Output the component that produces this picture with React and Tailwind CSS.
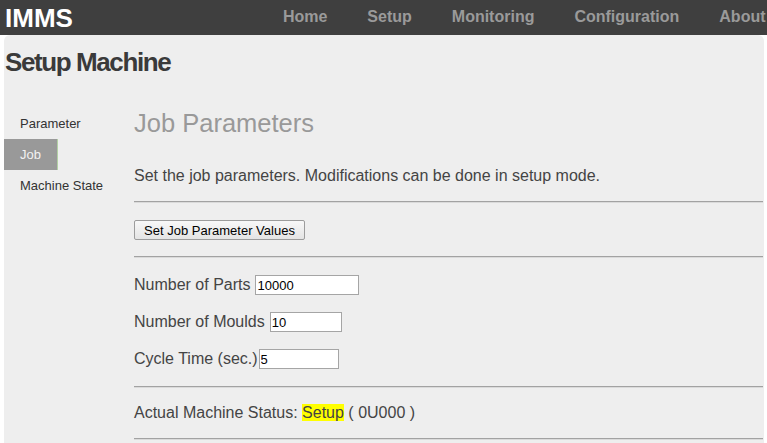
const NAV_ITEMS = ["Home", "Setup", "Monitoring", "Configuration", "About"];

const SIDE_ITEMS = [
  { label: "Parameter", active: false },
  { label: "Job", active: true },
  { label: "Machine State", active: false },
];

const Rule = () => (
  <div className="h-[2px] border-t border-b border-t-[#a2a2a2] border-b-[#dadada]" />
);

const Field = ({ label, value, width, spaced = true, className = "" }) => (
  <div className={`flex items-center h-[20px] ${className}`}>
    <span className="text-[16px] text-[#444]">{label}</span>
    <input
      defaultValue={value}
      className={`h-[20px] ${spaced ? "ml-[5px]" : "ml-[1px]"} ${width} border border-[#a5a5a5] bg-white px-[1px] text-[13px] text-black outline-none`}
    />
  </div>
);

const App = () => {
  return (
    <div
      className="min-h-[443px] w-[767px] overflow-hidden bg-white"
      style={{ fontFamily: '"Liberation Sans", Arial, sans-serif' }}
    >
      <div className="flex h-[35px] items-center bg-[#3f3f3f]">
        <div className="pl-[5px] text-[26px] font-bold leading-none text-white">
          IMMS
        </div>
        <ul className="-mt-[1px] ml-[210px] flex gap-[40px] whitespace-nowrap text-[16px] font-bold text-[#9a9a9a]">
          {NAV_ITEMS.map((item) => (
            <li key={item}>{item}</li>
          ))}
        </ul>
      </div>

      <div className="ml-[4px] mr-[3px] min-h-[420px] rounded-t-[6px] bg-[#eeeeee] pt-[12px]">
        <h1 className="pl-[1px] text-[26px] font-bold leading-[30px] tracking-[-1.4px] text-[#3a3a3a]">
          Setup Machine
        </h1>

        <div className="mt-[31px] flex">
          <ul className="w-[130px] shrink-0 text-[13px]">
            {SIDE_ITEMS.map((item) => (
              <li key={item.label} className="h-[31px]">
                <span
                  className={
                    item.active
                      ? "inline-flex h-[31px] items-center border-r border-[#b2cfa4] bg-[#999] px-[16px] text-[#f2f2f2]"
                      : "inline-flex h-[31px] items-center px-[16px] text-[#333]"
                  }
                >
                  {item.label}
                </span>
              </li>
            ))}
          </ul>

          <div className="flex-1 pr-[1px]">
            <h2 className="text-[25.5px] leading-[30px] text-[#999]">
              Job Parameters
            </h2>
            <p className="mt-[28px] text-[16px] leading-[20px] text-[#444]">
              Set the job parameters. Modifications can be done in setup mode.
            </p>
            <div className="mt-[15px]">
              <Rule />
            </div>
            <button className="mt-[17px] block h-[20px] w-[171px] rounded-[2px] border border-[#9c9c9c] bg-gradient-to-b from-[#f8f8f8] to-[#e4e4e4] text-center text-[13px] leading-none text-black">
              Set Job Parameter Values
            </button>
            <div className="mt-[16px]">
              <Rule />
            </div>
            <Field
              className="mt-[17px]"
              label="Number of Parts"
              value="10000"
              width="w-[104px]"
            />
            <Field
              className="mt-[17px]"
              label="Number of Moulds"
              value="10"
              width="w-[72px]"
            />
            <Field
              className="mt-[17px]"
              label="Cycle Time (sec.)"
              value="5"
              width="w-[80px]"
              spaced={false}
            />
            <div className="mt-[17px]">
              <Rule />
            </div>
            <p className="mt-[15px] text-[16px] leading-[20px] text-[#444]">
              Actual Machine Status:{" "}
              <span className="bg-[#ffff00]">Setup</span> ( 0U000 )
            </p>
            <div className="mt-[15px]">
              <Rule />
            </div>
          </div>
        </div>
      </div>
    </div>
  );
};

export default App;
